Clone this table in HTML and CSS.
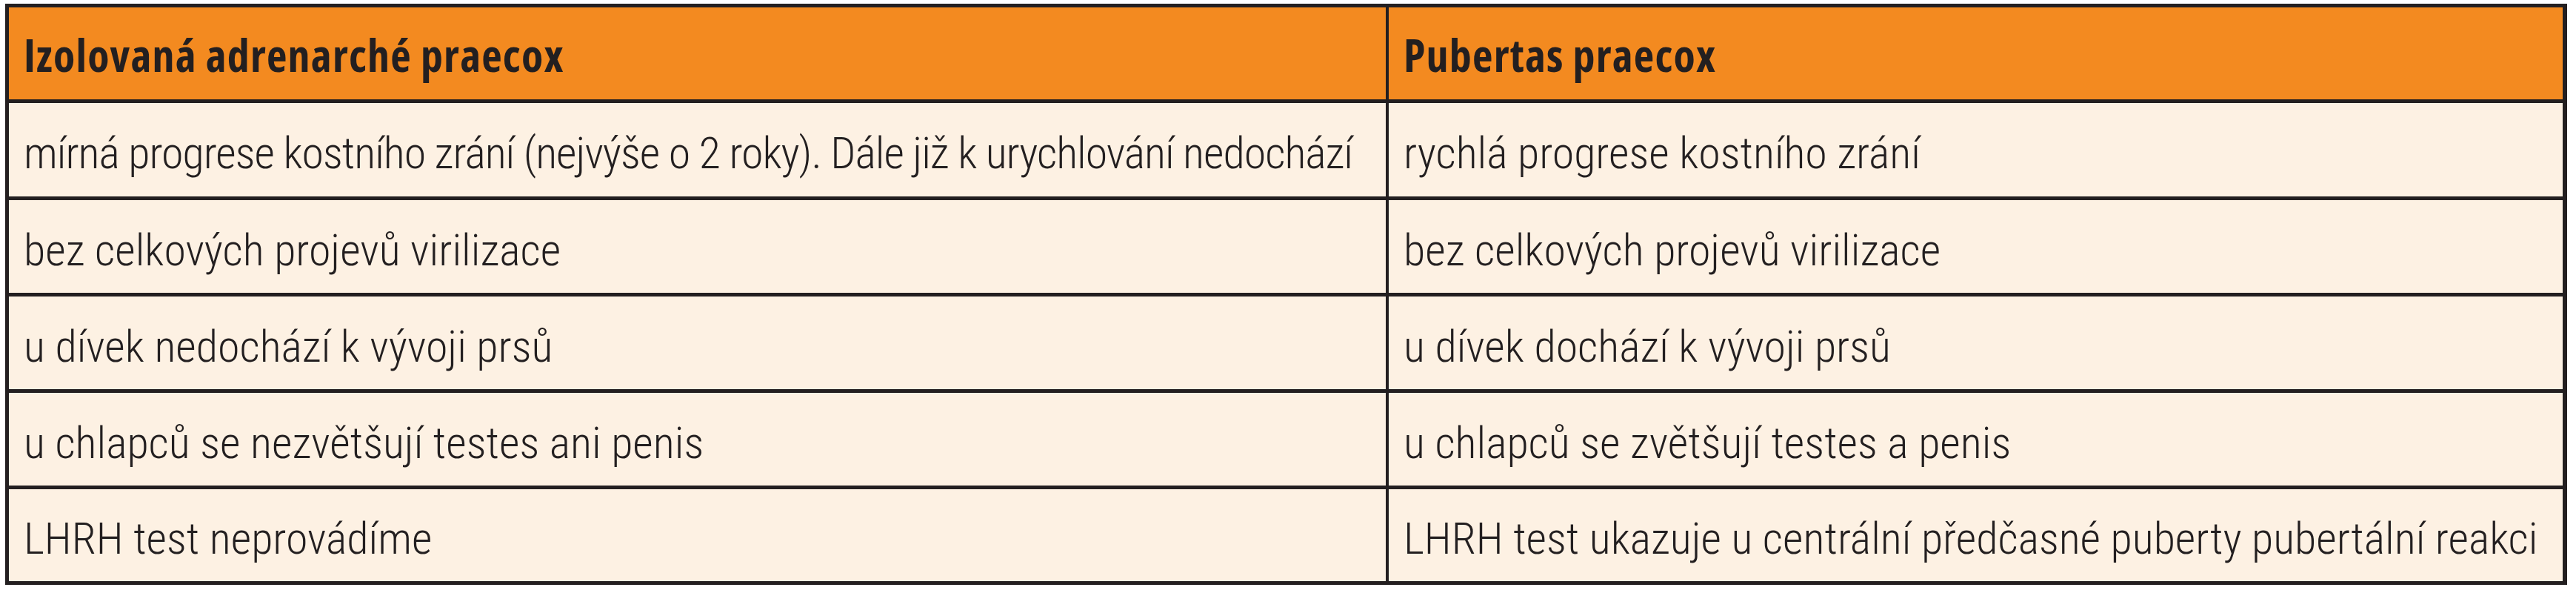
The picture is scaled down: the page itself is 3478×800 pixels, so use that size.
FILE: index.html
```html
<!DOCTYPE html>
<html lang="cs">
<head>
<meta charset="utf-8">
<title>Adrenarché vs pubertas praecox</title>
<link rel="stylesheet" href="styles.css">
</head>
<body>
<div class="table">
  <div class="cell head">Izolovaná adrenarché praecox</div>
  <div class="cell head">Pubertas praecox</div>
  <div class="cell tight">mírná progrese kostního zrání (nejvýše o 2 roky). Dále již k urychlování nedochází</div>
  <div class="cell">rychlá progrese kostního zrání</div>
  <div class="cell">bez celkových projevů virilizace</div>
  <div class="cell">bez celkových projevů virilizace</div>
  <div class="cell">u dívek nedochází k vývoji prsů</div>
  <div class="cell">u dívek dochází k vývoji prsů</div>
  <div class="cell">u chlapců se nezvětšují testes ani penis</div>
  <div class="cell">u chlapců se zvětšují testes a penis</div>
  <div class="cell">LHRH test neprovádíme</div>
  <div class="cell">LHRH test ukazuje u centrální předčasné puberty pubertální reakci</div>
</div>
</body>
</html>
```

FILE: styles.css
```css
html, body {
  margin: 0;
  padding: 0;
  background: #ffffff;
}

body {
  padding: 5px 0 0 7px;
}

.table {
  display: grid;
  width: 3459px;
  box-sizing: border-box;
  grid-template-columns: 1859px 1585px;
  grid-template-rows: 124px 126px 125px 125px 125px 124px;
  gap: 5px 4px;
  padding: 5px 6px 5px 5px;
  background: #231f20;
  font-size: 60px;
  color: #231f20;
}

.cell {
  display: flex;
  align-items: center;
  padding: 9px 0 0 20px;
  background: #fdf1e3;
  font-family: "Roboto Condensed", "Open Sans", sans-serif;
  font-weight: 300;
  white-space: nowrap;
  overflow: hidden;
}

.head {
  padding-top: 4px;
  background: #f38a20;
  font-family: "Open Sans", "Noto Sans", sans-serif;
  font-weight: 700;
  font-stretch: 75%;
  letter-spacing: 1.2px;
}

.tight {
  letter-spacing: -1px;
}
```
